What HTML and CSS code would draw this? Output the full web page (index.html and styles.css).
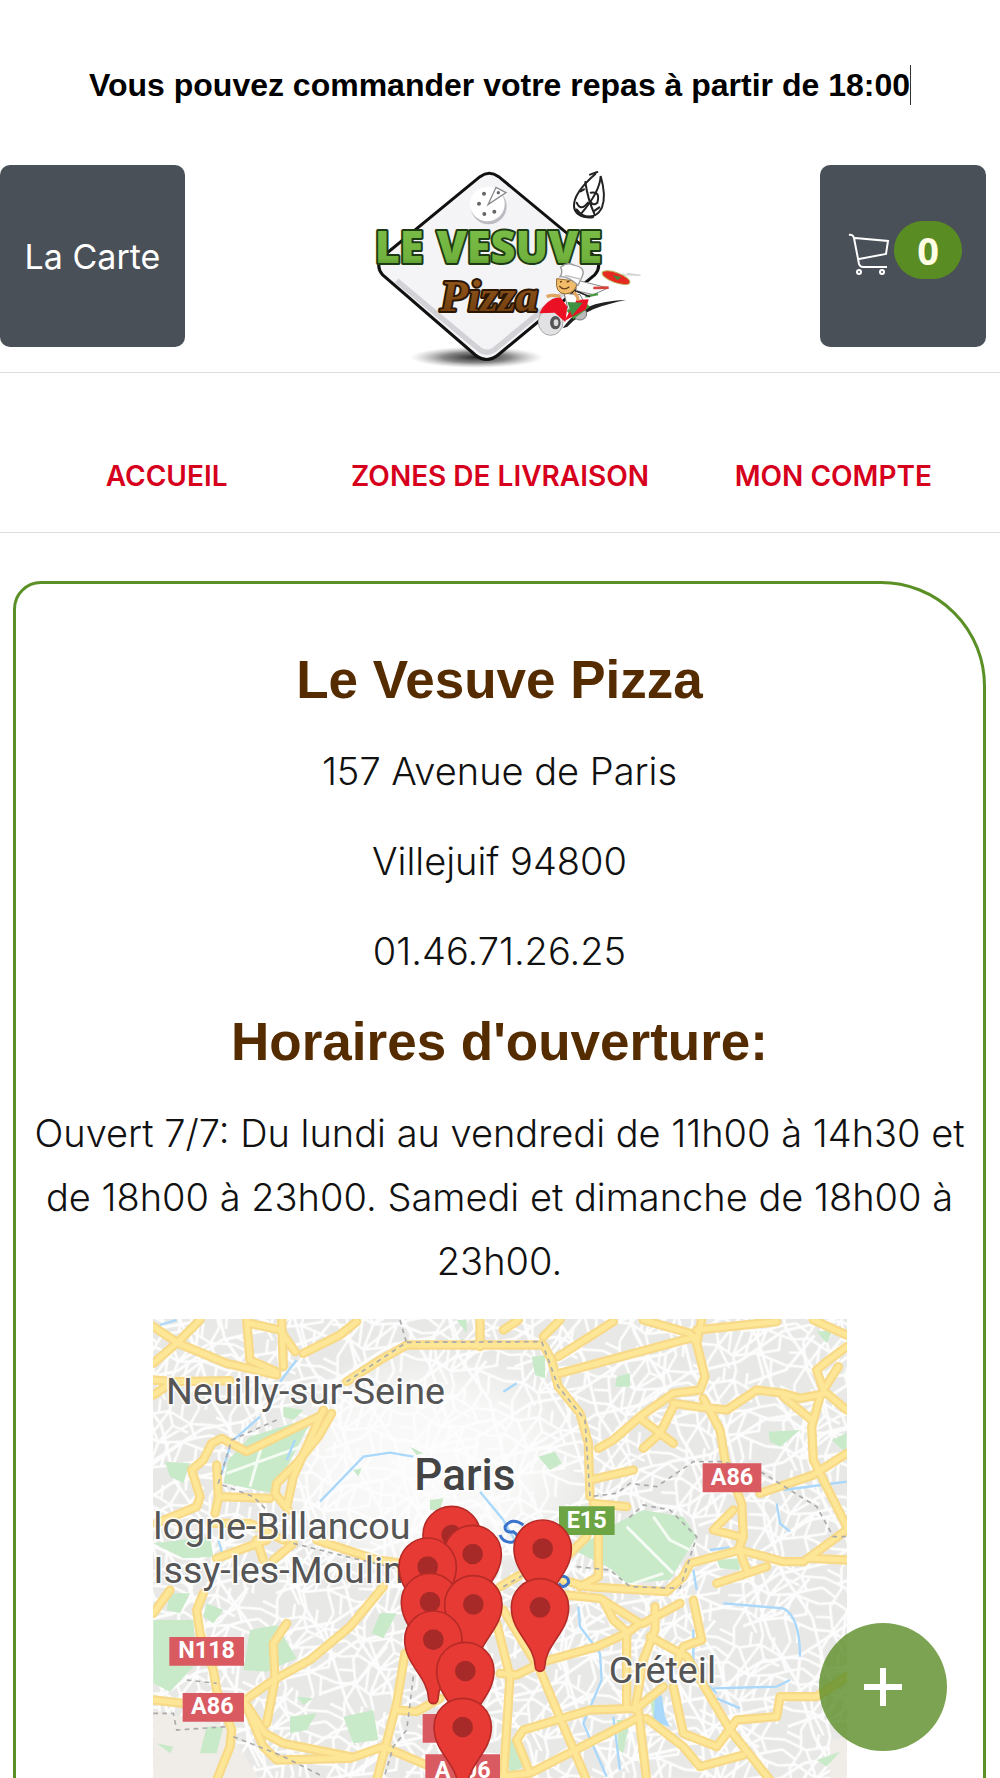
FILE: index.html
```html
<!DOCTYPE html>
<html lang="fr">
<head>
<meta charset="utf-8">
<meta name="viewport" content="width=device-width, initial-scale=1">
<title>Le Vesuve Pizza</title>
<link rel="stylesheet" href="styles.css">
</head>
<body>
<div class="page">
  <p class="notice"><span class="typed">Vous pouvez commander votre repas à partir de 18:00</span></p>

  <header class="header">
    <button class="tile tile-menu" type="button">La Carte</button>
    <a class="logo" href="#" aria-label="Le Vesuve Pizza">
      <svg viewBox="-30 0 900 636" width="300" height="212">
        <defs>
          <linearGradient id="plate" x1="0" y1="0" x2="1" y2="1">
            <stop offset="0" stop-color="#d8d8dc"/><stop offset=".15" stop-color="#f5f4f7"/><stop offset=".85" stop-color="#f3f2f5"/><stop offset="1" stop-color="#8e8e98"/>
          </linearGradient>
          <radialGradient id="ground"><stop offset="0" stop-color="#222"/><stop offset=".5" stop-color="#555" stop-opacity=".7"/><stop offset="1" stop-color="#999" stop-opacity="0"/></radialGradient>
          <linearGradient id="leaf" x1="0" y1="0" x2="0" y2="1"><stop offset="0" stop-color="#7cc04a"/><stop offset=".7" stop-color="#70b23d"/><stop offset="1" stop-color="#2f6a1b"/></linearGradient>
          <linearGradient id="crust" x1="0" y1="0" x2="0" y2="1"><stop offset="0" stop-color="#9a5d1c"/><stop offset="1" stop-color="#6b3a0d"/></linearGradient>
        </defs>
        <ellipse cx="350" cy="592" rx="200" ry="32" fill="url(#ground)"/>
        <path d="M360 50Q388 30 416 50L700 285Q730 315 704 345L414 585Q380 612 346 585L68 345Q42 315 74 285Z" fill="url(#plate)" stroke="#111" stroke-width="9"/>
        <path d="M110 362L360 570Q380 584 402 570L660 358" fill="none" stroke="#70707a" stroke-opacity=".25" stroke-width="16"/>
        <circle cx="386" cy="139" r="54" fill="#bcbcc2"/>
        <circle cx="382" cy="132" r="52" fill="#fff"/>
        <path d="M384 134L408 82L438 98Z" fill="#fff" stroke="#8a8a8e" stroke-width="4"/>
        <g fill="#666"><circle cx="372" cy="101" r="6"/><circle cx="357" cy="131" r="6"/><circle cx="373" cy="162" r="6"/><circle cx="403" cy="155" r="6"/><circle cx="415" cy="98" r="5"/></g>
        <g class="logo-name" fill="url(#leaf)" stroke="#1e3a14">
          <text x="44" y="310">LE</text><text x="230" y="310">VESUVE</text>
        </g>
        <text class="logo-pizza" x="240" y="452" fill="url(#crust)" stroke="#2b1604">Pizza</text>
        <!-- calligraphic drop -->
        <g fill="none" stroke="#222" stroke-linecap="round">
          <path d="M706 42C668 75 640 110 642 140C645 176 706 186 726 142C738 112 730 76 722 48C720 90 690 130 664 160" stroke-width="6"/>
          <path d="M676 66C682 110 694 142 704 164M650 128Q662 156 684 128M692 98Q722 92 712 128Q698 140 690 122M662 94L672 88M690 44L712 36M704 152L718 142" stroke-width="6"/>
          <path d="M650 150Q668 176 698 170" stroke-width="9"/>
        </g>
        <!-- courier on a scooter -->
        <path d="M608 505C650 446 700 424 798 420C730 434 668 452 622 500Z" fill="#222"/>
        <path d="M770 344L842 346L800 340" stroke="#d5d5d5" stroke-width="4" fill="none"/>
        <ellipse cx="768" cy="353" rx="44" ry="15" transform="rotate(20 768 353)" fill="#e52a20" stroke="#b8b05a" stroke-width="3"/>
        <path d="M758 346L784 352L772 360Z" fill="#3c8a3a"/>
        <path d="M650 360L744 384L700 404L648 392Z" fill="#fafafa" stroke="#888" stroke-width="3"/>
        <path d="M700 384L746 383" stroke="#d8433c" stroke-width="8"/><path d="M676 410L714 402" stroke="#4c9a47" stroke-width="7"/><path d="M650 394L690 410" stroke="#222" stroke-width="5"/>
        <ellipse cx="572" cy="486" rx="37" ry="40" fill="#e2e2e4" stroke="#aaa" stroke-width="3"/>
        <ellipse cx="586" cy="488" rx="16" ry="20" fill="#555"/><ellipse cx="588" cy="488" rx="7" ry="10" fill="#ddd"/>
        <ellipse cx="660" cy="462" rx="20" ry="18" fill="#bbb" stroke="#777" stroke-width="3"/>
        <path d="M612 400L660 404L680 440L630 470Z" fill="#fff" stroke="#777" stroke-width="3"/>
        <path d="M620 452L670 420L690 440L640 478Z" fill="#4a9a40"/>
        <path d="M538 460Q556 418 600 410L622 440L616 486L584 458Z" fill="#ec1025"/><path d="M650 420L686 418L678 448L612 484Z" fill="#ec1025"/>
        <path d="M622 426L668 428L636 468Z" fill="#3f9144"/>
        <path d="M560 410Q580 402 600 410M640 396Q656 410 654 422" stroke="#e0a55e" stroke-width="10" fill="none"/>
        <path d="M590 356Q584 400 616 402Q648 400 652 364Z" fill="#f2bd6a" stroke="#9a6a30" stroke-width="3"/>
        <path d="M598 378Q612 394 628 380M600 366L606 364M620 366L628 364" stroke="#6b3c16" stroke-width="4" fill="none"/>
        <path d="M600 350Q610 338 602 322Q622 304 644 316Q676 322 668 346L654 376Q626 348 600 350Z" fill="#fff" stroke="#999" stroke-width="4"/>
        <path d="M616 346L664 358" stroke="#bbb" stroke-width="4"/>
      </svg>
    </a>
    <button class="tile tile-cart" type="button" aria-label="Panier">
      <svg class="cart" viewBox="0 0 42 42" width="42" height="42" fill="none" stroke="#fff">
        <path d="M1 2Q5 1 6 5L11 31Q12 34 15 34H39M7 5L40 8L38 21L11 26" stroke-width="2"/>
        <circle cx="11" cy="39" r="2" stroke-width="2"/><circle cx="34" cy="39" r="2" stroke-width="2"/>
      </svg>
      <span class="count">0</span>
    </button>
  </header>

  <nav class="nav">
    <a href="#">ACCUEIL</a>
    <a href="#">ZONES DE LIVRAISON</a>
    <a href="#">MON COMPTE</a>
  </nav>

  <main class="card">
    <h2>Le Vesuve Pizza</h2>
    <p>157 Avenue de Paris</p>
    <p>Villejuif 94800</p>
    <p>01.46.71.26.25</p>
    <h2>Horaires d'ouverture:</h2>
    <p>Ouvert 7/7: Du lundi au vendredi de 11h00 à 14h30 et de 18h00 à 23h00. Samedi et dimanche de 18h00 à 23h00.</p>

    <svg class="map" viewBox="9 27 2082 2082" role="img" aria-label="Zones de livraison">
      <defs>
        <pattern id="streets" width="270" height="250" patternUnits="userSpaceOnUse" patternTransform="rotate(14)">
          <rect width="270" height="250" fill="#e8e8e6"/>
          <path d="M0 40L70 55L130 30L200 52L270 40M0 120L50 105L120 130L190 110L270 120M0 200L60 190L110 210L180 185L270 200M40 0L55 60L35 120L60 190L40 250M130 0L130 30L150 70L120 130L110 210L130 250M215 0L200 52L225 90L190 110L180 185L215 250M70 55L120 130M130 30L60 190M200 52L120 130M190 110L110 210M225 90L270 70M0 70L45 90M180 185L240 160L235 120M60 190L110 250M0 160L50 150M150 70L200 80M95 0L100 42M235 250L225 195M85 117L95 205M150 120L145 197M0 15L48 25M165 0L170 42" fill="none" stroke="#fdfdfd" stroke-width="8"/>
        </pattern>
        <pattern id="lanes" width="310" height="330" patternUnits="userSpaceOnUse" patternTransform="rotate(-24)">
          <path d="M0 60L120 90L310 60M0 200L160 170L310 200M60 0L80 160L60 330M200 0L170 170L200 330M120 90L80 160M0 270L120 280L240 220" fill="none" stroke="#fdfdfd" stroke-width="9"/>
        </pattern>
        <radialGradient id="centre"><stop offset="0" stop-color="#fdfdfd" stop-opacity=".9"/><stop offset=".6" stop-color="#fdfdfd" stop-opacity=".7"/><stop offset="1" stop-color="#fdfdfd" stop-opacity="0"/></radialGradient>
        <path id="pin" d="M-14 178C-16 110 -86 76 -86 0A86 86 0 0 1 86 0C86 76 16 110 14 178A14 14 0 0 1 -14 178Z"/>
        <g id="roads" fill="none" stroke-linejoin="round" stroke-linecap="round">
          <path d="M10 50L85 100L230 160L380 195M10 160L85 95L150 30M290 30L300 150L380 185M395 30L400 170M300 40L390 60L435 125M460 130L570 75L620 35M10 210L70 215L10 255M70 215L240 212"/>
          <path d="M590 215L690 150L770 105L1180 105L1205 150L1225 230L1290 310L1315 400L1320 560M990 30V110M545 310L505 380L440 460L380 520L375 550L415 600M520 300L430 500L410 590M505 320L290 425L215 385L185 400L160 450L125 480L150 560L140 590L20 640M200 465L205 560L360 565M205 565L195 610M400 690L300 640L180 640"/>
          <path d="M200 745L350 690M320 690L340 750M370 750L430 700M500 690L680 750L760 760M700 830L600 950L480 1050L370 1110L285 1170M410 940L370 1000L375 1110L350 1240M160 850L140 900L150 970L190 1080L200 1140L245 1260L240 1310L200 1410M10 1170L100 1180L290 1185L345 1270L400 1300L600 1340M290 1190L340 1310L380 1350L600 1345L700 1310L830 1365M765 1030L740 1180L680 1410M740 1200L800 1205L870 1165M10 910L60 840M1040 940L1080 1100L1060 1410"/>
          <path d="M1060 60L1105 30M1180 80L1230 30M1225 140L1390 35M1230 190L1600 90L1640 80M1480 30L1620 70L1640 100L1665 200L1650 240L1570 250L1470 320L1390 390L1345 415M1655 30L1640 100M1640 60L1880 35M1990 30L2090 75M1470 325L1570 400M1570 290L1530 370L1480 415M1570 280L1640 290L1730 300L1820 240L1900 250L1950 265L2030 250L2090 300M1660 265L1710 360L1725 450L1775 580L1780 680L1765 720M1900 260L1985 330M2010 260L1985 350L1990 450L2050 570L2090 650M2020 240L2000 180L2030 155L2090 110M2020 240L2065 170M1320 510L1450 480M1830 550L1990 495L2090 430M1330 580L1430 590M1750 600L1690 660L1770 680"/>
          <path d="M1345 680V800L1290 830M1310 680L1250 740M1050 830L1110 795M1240 810L1310 830L1550 845L1600 800L1620 760L1770 720L1900 755L1960 755L2090 660M1700 820L1850 770M1770 725L1790 780M1980 745L2090 750M1250 855L1350 865L1470 940L1430 970L1340 1010L1180 1055L1100 1095L1050 1090M1360 870L1390 930L1430 965M1480 940L1590 880M1515 890V960L1480 1050L1455 1200M1430 970V1195M1630 870L1655 990L1600 1010L1580 1060M1500 980L1610 1040L1740 1260L1860 1410M1060 900L1170 1080L1220 1200L1310 1410M1050 1400L1140 1390L1100 1290L1120 1260L1320 1200L1460 1195L1540 1130M1150 1385L1470 1220M1465 1200L1490 1410M1490 1225L1600 1310L1650 1370L1780 1335M1570 1130L1600 1270L1700 1310L1760 1230L1880 1220L1890 1160L2000 1160L2090 1100"/>
        </g>
      </defs>
      <rect x="9" y="27" width="2082" height="2082" fill="url(#streets)"/>
      <rect x="9" y="27" width="2082" height="2082" fill="url(#lanes)"/>
      <ellipse cx="830" cy="470" rx="520" ry="360" fill="url(#centre)"/>
      <path d="M10 1200L230 1250L330 1410H10ZM2040 1290L2090 1280V1410H2040Z" fill="#f0ece7"/>
      <g fill="#c8eac9">
        <path d="M300 380L490 320L370 550L220 520L235 450ZM400 290L460 300L430 330L400 320ZM45 455L120 460L100 520L60 500ZM10 700L180 680L190 740L100 745ZM60 850L120 850L90 910L50 900ZM170 880L220 900L190 940L160 920ZM10 930L130 930L140 1060L60 1145L10 1120ZM300 960L380 945L440 1045L350 1085L280 1080ZM690 910L740 910L700 985L665 970ZM420 1220L500 1210L470 1260L420 1270ZM580 1220L670 1200L685 1290L610 1300ZM170 1250L220 1250L200 1330L150 1330ZM20 1300L70 1310L60 1330ZM440 1160L490 1165L460 1185Z"/>
        <path d="M1270 720L1400 640L1480 600L1600 620L1640 680L1560 810L1430 820L1380 775ZM1145 140L1185 135V205L1155 195ZM1400 200L1440 190V230H1395ZM1165 440L1215 425L1235 460L1200 480ZM1855 365L1950 360L1890 410L1860 395ZM2000 65L2050 60L2030 100ZM2045 390L2090 370V430ZM1700 750L1765 745L1770 780L1710 775ZM1065 1290L1110 1290L1120 1370L1080 1390ZM1400 1230L1440 1230L1420 1330L1405 1320ZM1500 1170L1540 1160L1510 1230ZM2000 1350L2070 1325L2030 1370ZM780 410L820 430L800 435ZM840 570L880 565L870 600H840ZM920 30H950V70ZM610 480L635 475L625 500Z"/>
      </g>
      <path d="M1430 650L1570 790M1510 620L1560 690L1620 720M1540 790L1450 820M230 490L480 400M340 390L300 530" stroke="#f4fbf2" stroke-width="9" fill="none"/>
      <g fill="none" stroke="#aad8fb" stroke-width="7">
        <path d="M440 150L390 215M330 320L245 395L205 520M435 390L410 450M510 575L640 440L720 428L790 440M990 545L1060 630L1100 700M205 690L220 740M1060 245L1100 220M1285 890L1290 950L1350 1030L1355 1110L1300 1240L1370 1400M1390 1220L1410 1380M1630 780L1640 840M1720 880L1900 895Q1950 920 1950 1040M1630 960V1080L1700 1150M1690 1135L1880 1130L1920 1110M1700 1165L1770 1195M1880 580L1890 640L1920 665M1900 540L2090 515M1680 720L1740 712M30 45L80 30"/>
      </g>
      <path d="M1515 1160L1535 1155L1545 1220L1560 1250L1510 1235Z" fill="#aad8fb"/>
      <use href="#roads" stroke="#f7d987" stroke-width="28"/>
      <use href="#roads" stroke="#fde797" stroke-width="15"/>
      <path d="M590 215L770 97L1175 95L1225 230L1305 330L1320 560L1400 550L1440 520L1520 530L1630 455H1720L1840 490L2000 590L2050 680L2090 680M380 330L245 390L205 520L310 560L360 610M430 700L590 740L760 780M1060 830L1120 795M1280 770L1380 780L1440 830L1590 835L1640 680L1560 600L1480 585L1430 630M250 1280L390 1335L520 1400M790 1100L770 1260L730 1310L700 1410M10 1210H70L80 1260L230 1250M750 30L770 100M110 1110L200 1120" fill="none" stroke="#aaa" stroke-width="5" stroke-dasharray="14 13"/>

      <g class="town" font-size="113">
        <text x="48" y="283">Neuilly-sur-Seine</text>
        <text x="10" y="688">logne-Billancou</text>
        <text x="10" y="819">Issy-les-Moulin</text>
        <text x="1376" y="1119">Créteil</text>
      </g>
      <text class="town city" x="793" y="540" font-size="132">Paris</text>
      <path d="M1120 645Q1085 620 1065 650Q1065 670 1090 665Q1115 680 1088 696Q1060 700 1050 675M1226 800Q1256 795 1256 818Q1240 840 1226 820" fill="none" stroke="#3b74cc" stroke-width="9"/>
      <g class="shields">
        <g fill="#d95b61"><path d="M58 981H282V1067H58ZM98 1149H282V1235H98ZM1658 460H1834V547H1658ZM818 1212H930V1298H818ZM826 1333H1050V1419H826Z"/></g>
        <path d="M1227 589H1394V675H1227Z" fill="#6da544"/>
        <text x="170" y="1045">N118</text><text x="187" y="1213">A86</text><text x="1746" y="525">A86</text><text x="1310" y="653">E15</text><text x="938" y="1404">A106</text>
      </g>
      <g fill="#e73a35" stroke="#b72b27" stroke-width="5">
        <g transform="translate(905 675)"><use href="#pin"/><circle r="31" class="dot"/></g>
        <g transform="translate(968 732)"><use href="#pin"/><circle r="31" class="dot"/></g>
        <g transform="translate(833 770)"><use href="#pin"/><circle r="31" class="dot"/></g>
        <g transform="translate(840 876)"><use href="#pin"/><circle r="31" class="dot"/></g>
        <g transform="translate(970 883)"><use href="#pin"/><circle r="31" class="dot"/></g>
        <g transform="translate(850 989)"><use href="#pin"/><circle r="31" class="dot"/></g>
        <g transform="translate(946 1083)"><use href="#pin"/><circle r="31" class="dot"/></g>
        <g transform="translate(938 1251)"><use href="#pin"/><circle r="31" class="dot"/></g>
        <g transform="translate(1178 716)"><use href="#pin"/><circle r="31" class="dot"/></g>
        <g transform="translate(1170 892)"><use href="#pin"/><circle r="31" class="dot"/></g>
      </g>
    </svg>
  </main>
</div>

<button class="fab" type="button" aria-label="Ajouter">
  <svg viewBox="0 0 38 38" width="38" height="38"><path d="M16 0H22V16H38V22H22V38H16V22H0V16H16Z" fill="#fff"/></svg>
</button>
</body>
</html>
```

FILE: styles.css
```css
* { box-sizing: border-box; }

body {
  margin: 0;
  background: #fff;
  color: #111;
  font-family: "Liberation Sans", Arial, sans-serif;
}

.page {
  height: 100vh;
  overflow-y: auto;
  scrollbar-width: none;
}

h2, p { margin: 0; }
button { border: 0; padding: 0; cursor: pointer; }

.notice {
  padding: 65px 16px 60px;
  text-align: center;
  font-size: 32px;
  line-height: 40px;
  font-weight: 700;
  color: #000;
}

.typed {
  display: inline-block;
  border-right: 1px solid #333;
}

.header {
  display: grid;
  grid-template-columns: 1fr auto 1fr;
  align-items: start;
  border-bottom: 1px solid #dedede;
}

.tile {
  height: 182px;
  border-radius: 10px;
  background: #495057;
  color: #fff;
  font-family: Inter, sans-serif;
}

.tile-menu {
  width: 185px;
  font-size: 34px;
}

.tile-cart {
  display: flex;
  align-items: center;
  justify-content: center;
  gap: 4px;
  justify-self: end;
  width: 166px;
  margin-right: 14px;
  padding: 0 0 12px 4px;
}

.cart { margin-top: 8px; }

.count {
  width: 68px;
  border-radius: 30px;
  background: #5a8c24;
  color: #fffde4;
  font-family: "Noto Sans", sans-serif;
  font-size: 38px;
  line-height: 58px;
  font-weight: 700;
}

.logo {
  display: block;
  height: 207px;
}

.logo svg {
  display: block;
  margin-top: -5px;
}

.logo-name {
  font-family: "Open Sans", sans-serif;
  font-size: 130px;
  font-weight: 800;
  stroke-width: 12px;
  stroke-linejoin: round;
  paint-order: stroke;
}

.logo-pizza {
  font-family: "Liberation Serif", serif;
  font-size: 136px;
  font-style: italic;
  font-weight: 700;
  stroke-width: 12px;
  stroke-linejoin: round;
  paint-order: stroke;
}

.nav {
  display: grid;
  grid-template-columns: repeat(3, 1fr);
  padding: 84px 0 37px;
  border-bottom: 1px solid #dedede;
  text-align: center;
}

.nav a {
  color: #d6001c;
  font-family: Inter, sans-serif;
  font-size: 28px;
  line-height: 38px;
  font-weight: 600;
  text-decoration: none;
}

.card {
  display: flex;
  flex-direction: column;
  gap: 26px;
  margin: 48px 14px 48px 13px;
  padding: 63px 12px 40px;
  border: 3px solid #5a9026;
  border-radius: 28px 105px 28px 28px;
  text-align: center;
}

.card h2 {
  color: #552b00;
  font-size: 53px;
  line-height: 66px;
}

.card p {
  font-family: Inter, sans-serif;
  font-size: 38px;
  line-height: 64px;
  font-weight: 300;
}

.map {
  display: block;
  flex: none;
  align-self: center;
  width: 100%;
  max-width: 694px;
}

.town {
  fill: #555;
  stroke: #fff;
  stroke-width: 10px;
  stroke-opacity: .8;
  paint-order: stroke;
  font-family: Roboto, sans-serif;
}

.city {
  fill: #444;
  font-weight: 500;
}

.shields text {
  fill: #fff;
  font-family: Roboto, sans-serif;
  font-size: 70px;
  font-weight: 700;
  text-anchor: middle;
}

.dot {
  fill: #a82a28;
  stroke: none;
}

.fab {
  position: fixed;
  right: 53px;
  bottom: 27px;
  display: grid;
  place-items: center;
  width: 128px;
  height: 128px;
  border-radius: 50%;
  background: rgba(91, 140, 37, .8);
}
```
